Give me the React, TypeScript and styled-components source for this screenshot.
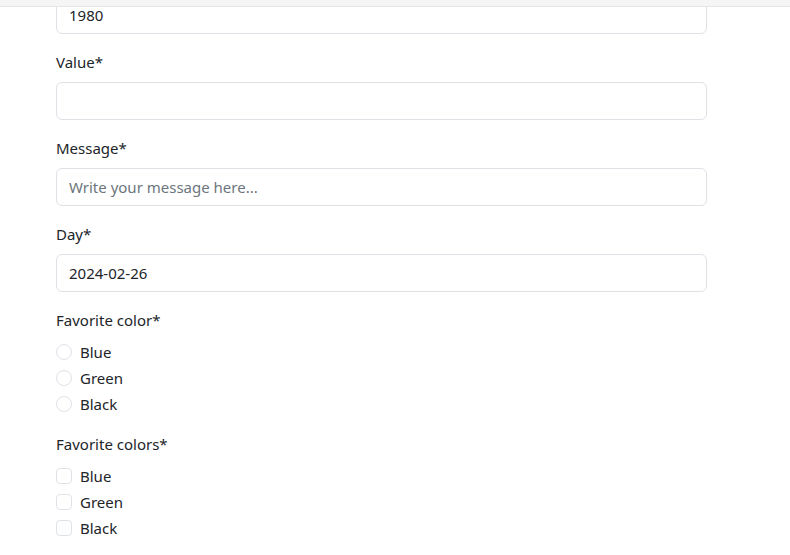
import React from "react";
import styled, { createGlobalStyle } from "styled-components";

const Global = createGlobalStyle`
  html, body { margin: 0; padding: 0; background: #fff; }
  body {
    font-family: "Noto Sans", "Open Sans", sans-serif;
    font-size: 15px;
    color: #212529;
    overflow: hidden;
  }
  * { box-sizing: border-box; }
`;

const TopBar = styled.div`
  position: fixed;
  top: 0;
  left: 0;
  right: 0;
  height: 7px;
  background: #f5f5f5;
  border-bottom: 1px solid #e6e6e6;
  z-index: 2;
`;

const Form = styled.form`
  width: 651px;
  margin: -4px 0 0 56px;
  display: flex;
  flex-direction: column;
  gap: 16px;
`;

const Group = styled.div`
  display: flex;
  flex-direction: column;
`;

const Label = styled.label`
  display: block;
  line-height: 24px;
  height: 24px;
  margin-bottom: 8px;
  font-size: 15px;
`;

const Input = styled.input`
  display: block;
  width: 100%;
  height: 38px;
  padding: 0 12px;
  font-family: inherit;
  font-size: 15px;
  color: #212529;
  background: #fff;
  border: 1px solid #dee2e6;
  border-radius: 6px;
  outline: none;
  &::placeholder { color: #6c757d; opacity: 1; }
`;

const Checks = styled.div`
  display: flex;
  flex-direction: column;
  gap: 2px;
`;

const Check = styled.label`
  display: flex;
  align-items: center;
  height: 24px;
  gap: 8px;
  font-size: 15px;
`;

const Box = styled.span<{ $round?: boolean }>`
  width: 16px;
  height: 16px;
  flex: none;
  border: 1px solid #dee2e6;
  border-radius: ${(p) => (p.$round ? "50%" : "4px")};
  background: #fff;
`;

const colors = ["Blue", "Green", "Black"];

export default function App() {
  return (
    <>
      <Global />
      <TopBar />
      <Form onSubmit={(e) => e.preventDefault()}>
        <Input defaultValue="1980" />
        <Group>
          <Label>Value*</Label>
          <Input />
        </Group>
        <Group>
          <Label>Message*</Label>
          <Input placeholder="Write your message here..." />
        </Group>
        <Group>
          <Label>Day*</Label>
          <Input defaultValue="2024-02-26" />
        </Group>
        <Group>
          <Label>Favorite color*</Label>
          <Checks>
            {colors.map((c) => (
              <Check key={c}>
                <Box $round />
                {c}
              </Check>
            ))}
          </Checks>
        </Group>
        <Group>
          <Label>Favorite colors*</Label>
          <Checks>
            {colors.map((c) => (
              <Check key={c}>
                <Box />
                {c}
              </Check>
            ))}
          </Checks>
        </Group>
      </Form>
    </>
  );
}
